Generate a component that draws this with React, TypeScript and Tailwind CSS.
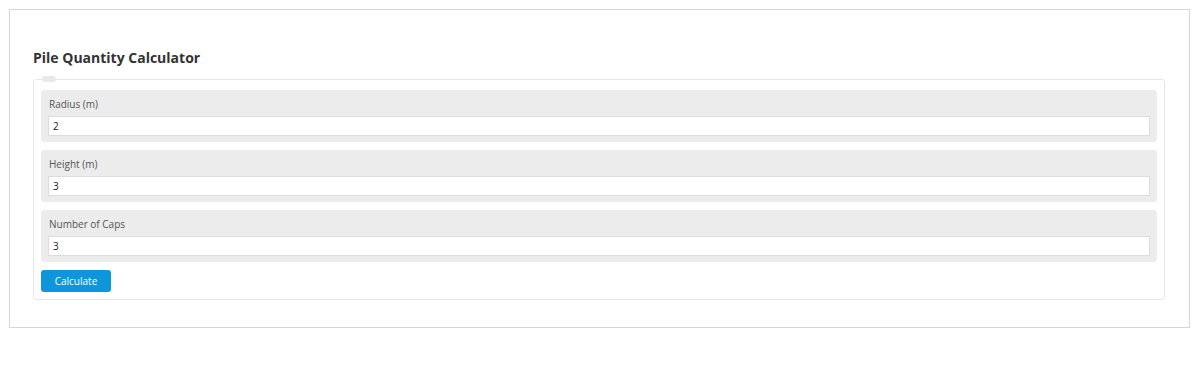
import React from "react";

const fields = [
  { label: "Radius (m)", value: "2" },
  { label: "Height (m)", value: "3" },
  { label: "Number of Caps", value: "3" },
];

export default function App() {
  return (
    <div className="w-[1200px] h-[367px] bg-white pt-[9px] pl-[9px]" style={{ fontFamily: '"Open Sans", "Noto Sans", sans-serif' }}>
      <div className="w-[1181px] h-[319px] border border-[#d6d6d6] pl-[23px] pr-[24px] pt-[38px]">
        <h2 className="text-[14px] leading-[20px] font-bold text-[#333333] mb-[11px]">Pile Quantity Calculator</h2>
        <div className="relative border border-[#e6e6e6] rounded-[3px] px-[7px] pt-[10px] pb-[7px] flex flex-col gap-[8px]">
          <div className="absolute left-[8px] top-[-4px] w-[14px] h-[6px] rounded-full bg-[#e8e8e8]" />
          {fields.map((f) => (
            <div key={f.label} className="bg-[#ebeceb] rounded-[3px] px-[7px] pt-[7px] pb-[6px]">
              <div className="text-[10px] leading-[14px] text-[#555555] mb-[5px] pl-[1px]">{f.label}</div>
              <div className="h-[20px] bg-white border border-[#dcdcdc] flex items-center px-[4px] text-[10px] text-[#222222]">{f.value}</div>
            </div>
          ))}
          <div className="flex">
            <button className="block w-[70px] h-[22px] rounded-[3px] bg-[#0e96dc] text-white text-[10px] leading-[22px]">Calculate</button>
          </div>
        </div>
      </div>
    </div>
  );
}
